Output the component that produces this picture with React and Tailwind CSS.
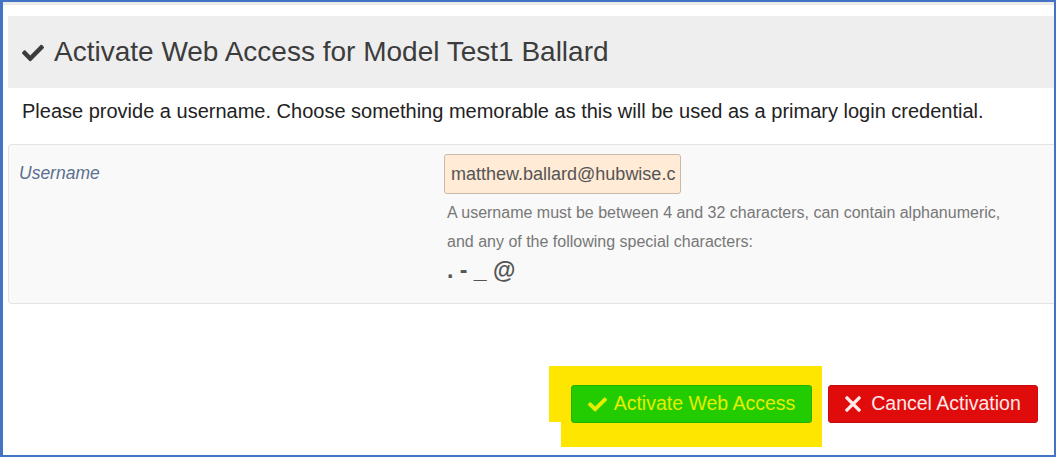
import React from 'react';

function CheckIcon({ className }) {
  return (
    <svg viewBox="0 0 512 512" className={className} fill="currentColor">
      <path d="M173.9 439.4l-166.4-166.4c-10-10-10-26.2 0-36.2l36.2-36.2c10-10 26.2-10 36.2 0L192 312.7 432.1 72.6c10-10 26.2-10 36.2 0l36.2 36.2c10 10 10 26.2 0 36.2L210.1 439.4c-10 10-26.2 10-36.2 0z" />
    </svg>
  );
}

function TimesIcon({ className }) {
  return (
    <svg viewBox="0 0 16 16" className={className} fill="none" stroke="currentColor" strokeWidth="3.2" strokeLinecap="square">
      <path d="M2 2L14 14M14 2L2 14" />
    </svg>
  );
}

export default function App() {
  return (
    <div className="w-[1056px] h-[457px] overflow-hidden bg-white border-2 border-l-[3px] border-[#4472c4] font-['Liberation_Sans',Arial,sans-serif]">
      <div className="h-[3px] bg-[#ebebeb]" />
      <div className="pl-[5px] pt-[11px]">
        {/* Header */}
        <div className="h-[72px] bg-[#eeeeee] flex items-center pl-[14px] text-[#3c3c3c]">
          <CheckIcon className="w-[22px] h-[22px] mr-[10px] mt-[2px]" />
          <h1 className="text-[28px] leading-none">Activate Web Access for Model Test1 Ballard</h1>
        </div>

        <p className="pl-[14px] mt-[12px] text-[20px] leading-[22px] text-[#222222]">
          Please provide a username. Choose something memorable as this will be used as a primary login credential.
        </p>

        {/* Form panel */}
        <div className="mt-[22px] h-[160px] bg-[#f9f9f9] border border-r-0 border-[#e4e4e4] rounded-l-[4px] flex pt-[9px]">
          <div className="w-[435px] pl-[10px] pt-[6px]">
            <label className="italic text-[17.5px] text-[#5b7090]">Username</label>
          </div>
          <div className="flex flex-col">
            <div className="w-[237px] h-[40px] bg-[#ffebd6] border border-[#c9b9a8] rounded-[3px] flex items-center pl-[6px] text-[18px] text-[#555555] overflow-hidden whitespace-nowrap">
              matthew.ballard@hubwise.c
            </div>
            <div className="pl-[3px] mt-[4px] text-[16px] leading-[29px] text-[#777777]">
              <div>A username must be between 4 and 32 characters, can contain alphanumeric,</div>
              <div>and any of the following special characters:</div>
              <div className="text-[23px] leading-[28px] font-bold text-[#555555]">. - _ @</div>
            </div>
          </div>
        </div>

        {/* Actions */}
        <div className="mt-[62px] flex justify-end items-start pr-[16px]">
          <div className="relative bg-[#ffe600] pt-[19px] pl-[22px] pr-[10px] pb-[24px]">
            <div className="absolute left-0 bottom-0 w-[12px] h-[25px] bg-white" />
            <button className="w-[241px] h-[38px] bg-[#22cc00] border border-[#1fb300] rounded-[3px] flex items-center justify-center gap-[7px] text-[19.5px] text-[#e8ec00]">
              <CheckIcon className="w-[19px] h-[19px]" />
              Activate Web Access
            </button>
          </div>
          <button className="ml-[6px] mt-[19px] w-[210px] h-[38px] bg-[#e00c0c] border border-[#c90b0b] rounded-[3px] flex items-center justify-center gap-[10px] text-[19.5px] text-[#ffe8e8]">
            <TimesIcon className="w-[16px] h-[16px]" />
            Cancel Activation
          </button>
        </div>
      </div>
    </div>
  );
}
